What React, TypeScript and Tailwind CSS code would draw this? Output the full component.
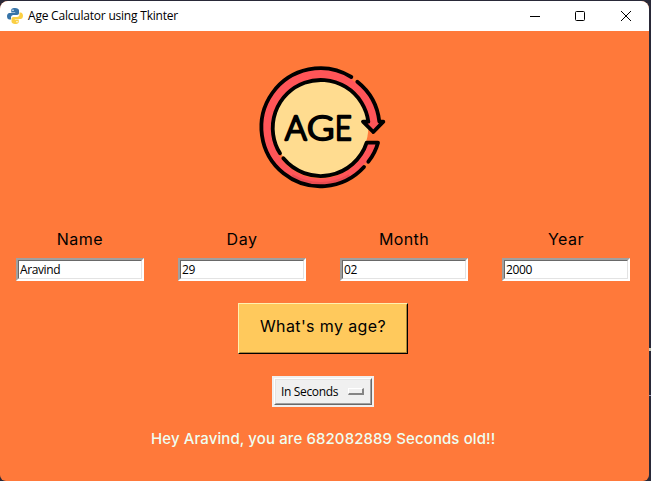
import React from 'react';

const fields = [
  { label: 'Name', value: 'Aravind', track: 'tracking-[0.5px]' },
  { label: 'Day', value: '29', track: 'tracking-[0.5px]' },
  { label: 'Month', value: '02', track: 'tracking-[0.35px]' },
  { label: 'Year', value: '2000', track: 'tracking-[0.5px]' },
];

function PythonIcon() {
  return (
    <svg className="h-4 w-4" viewBox="0 0 32 32">
      <path fill="#3774a8" d="M16 0C9 0 8.5 2.6 8.5 5v4H16.500v1H5C2 10 0 12.500 0 16.500S2 23 5 23h3v-4c0-3 2-5 5-5h7c2.500 0 4-1.800 4-4V5c0-3-3-5-8-5z" />
      <path fill="#fbcf43" d="M16 32c7 0 7.500-2.600 7.500-5v-4H15.500v-1H27c3 0 5-2.500 5-6.500S30 9 27 9h-2v4c0 3-2 5-5 5h-7c-2.500 0-4 1.800-4 4v5c0 3 3 5 7 5z" />
      <circle cx="12" cy="4.500" r="1.600" fill="#fff" />
      <circle cx="20" cy="27.500" r="1.600" fill="#fff" />
    </svg>
  );
}

function TitleBar() {
  return (
    <header className="flex h-[30px] items-center bg-white pl-[7px] text-black">
      <PythonIcon />
      <h1 className="ml-[5px] whitespace-nowrap text-[12px] leading-4 tracking-[-0.21px]">Age Calculator using Tkinter</h1>
      <div className="ml-auto flex items-center pr-[18px]">
        <svg className="h-[10px] w-[10px]" viewBox="0 0 10 10"><path d="M0 5.500h10" stroke="#000" /></svg>
        <svg className="ml-[35px] h-[10px] w-[10px]" viewBox="0 0 10 10"><rect x=".5" y=".5" width="9" height="9" rx="1" fill="none" stroke="#000" /></svg>
        <svg className="ml-[36px] h-[10px] w-[10px]" viewBox="0 0 10 10"><path d="M0 0l10 10M10 0L0 10" stroke="#000" /></svg>
      </div>
    </header>
  );
}

function AgeLogo() {
  return (
    <svg className="h-[135px] w-[145px]" viewBox="0 0 435 405">
      <circle cx="212" cy="202" r="143" fill="#ffdc90" />
      <path fill="#ff5558" d="M388 185A177 177 0 1 0 355 305L384 248H352A146 146 0 1 1 355 185H337L370 218L402 185Z" />
      <path fill="#e94c51" d="M122 354A177 177 0 0 0 302 354L296 343A165 165 0 0 1 128 343Z" />
      <path fill="none" stroke="#ff793a" strokeWidth="12" d="M309 54L318 61M350 312L346 317" />
      <g fill="none" stroke="#000" strokeWidth="11.500" strokeLinecap="round" strokeLinejoin="round">
        <path d="M304 51A177 177 0 1 0 342 321" />
        <path d="M322 65A177 177 0 0 1 388 185H400L370 216L339 185H355A144 144 0 1 0 90 280" />
        <path d="M100 295A145 145 0 0 0 350 248H384Q376 278 355 305" />
      </g>
      <g fontFamily="Lato, sans-serif" fontSize="100" fontWeight="300" fill="#000" stroke="#000" strokeWidth="7.500" strokeLinejoin="round">
        <text x="105" y="240" textLength="65" lengthAdjust="spacingAndGlyphs">A</text>
        <text x="171" y="240" textLength="82" lengthAdjust="spacingAndGlyphs">G</text>
        <text x="255" y="240" textLength="50" lengthAdjust="spacingAndGlyphs">E</text>
      </g>
    </svg>
  );
}

export default function App() {
  return (
    <div className="relative flex h-[481px] w-[651px] flex-col overflow-hidden bg-[#292938] pr-[2px] pt-px font-['Open_Sans','Noto_Sans',sans-serif]">
      <span className="absolute right-0 top-[348px] h-[3px] w-[2px] bg-[#c9cbb8]" />
      <span className="absolute right-0 top-[395px] h-px w-[2px] bg-[#9a98b5]" />
      <div className="flex flex-1 flex-col overflow-hidden rounded-b-[6px] rounded-t-[8px] bg-[#ff793a]">
        <TitleBar />
        <main className="flex flex-1 flex-col text-black">
          <div className="mt-[29px] flex pl-[250px]"><AgeLogo /></div>
          <div className="mt-[32px] flex gap-[34px] pl-[16px]">
            {fields.map((f) => (
              <label key={f.label} className="flex w-[128px] flex-col">
                <span className={`h-[31px] text-center font-['Inter',sans-serif] text-[16px] leading-[25px] ${f.track}`}>{f.label}</span>
                <span className="block h-[23px] border-2 border-b-white border-l-[#a0a0a0] border-r-white border-t-[#a0a0a0]">
                  <span className="flex h-full items-center border border-b-[#e3e3e3] border-l-[#696969] border-r-[#e3e3e3] border-t-[#696969] bg-white pl-px text-[12px] leading-4 tracking-[-0.4px]">{f.value}</span>
                </span>
              </label>
            ))}
          </div>
          <button className="ml-[238px] mt-[22px] h-[51px] w-[170px] border border-b-black border-l-[#fff0b0] border-r-black border-t-[#fff0b0]">
            <span className="flex h-full items-center justify-center whitespace-nowrap border border-b-[#a98538] border-l-[#ffc95c] border-r-[#a98538] border-t-[#ffc95c] bg-[#ffc95c] pb-[5px] font-['Inter',sans-serif] text-[16px] leading-6 tracking-[0.38px]">What's my age?</span>
          </button>
          <button className="ml-[272px] mt-[22px] h-[31px] w-[102px] bg-[#f0f0f0] p-[2px]">
            <span className="block h-full border border-b-[#696969] border-l-white border-r-[#696969] border-t-white">
              <span className="flex h-full items-center justify-between border border-b-[#a0a0a0] border-l-[#e3e3e3] border-r-[#a0a0a0] border-t-[#e3e3e3] pl-[5px] pr-[6px] text-[12px] leading-4 tracking-[-0.35px]">
                In Seconds
                <span className="h-[7px] w-[16px] border-b-2 border-l border-r-2 border-t border-b-[#858585] border-l-white border-r-[#858585] border-t-white bg-[#f0f0f0]" />
              </span>
            </span>
          </button>
          <p className="ml-[151px] mt-[20px] whitespace-nowrap font-['Inter',sans-serif] text-[15px] font-medium leading-6 tracking-[0.1px] text-[#eefff2]">Hey Aravind, you are 682082889 Seconds old!!</p>
        </main>
      </div>
    </div>
  );
}
